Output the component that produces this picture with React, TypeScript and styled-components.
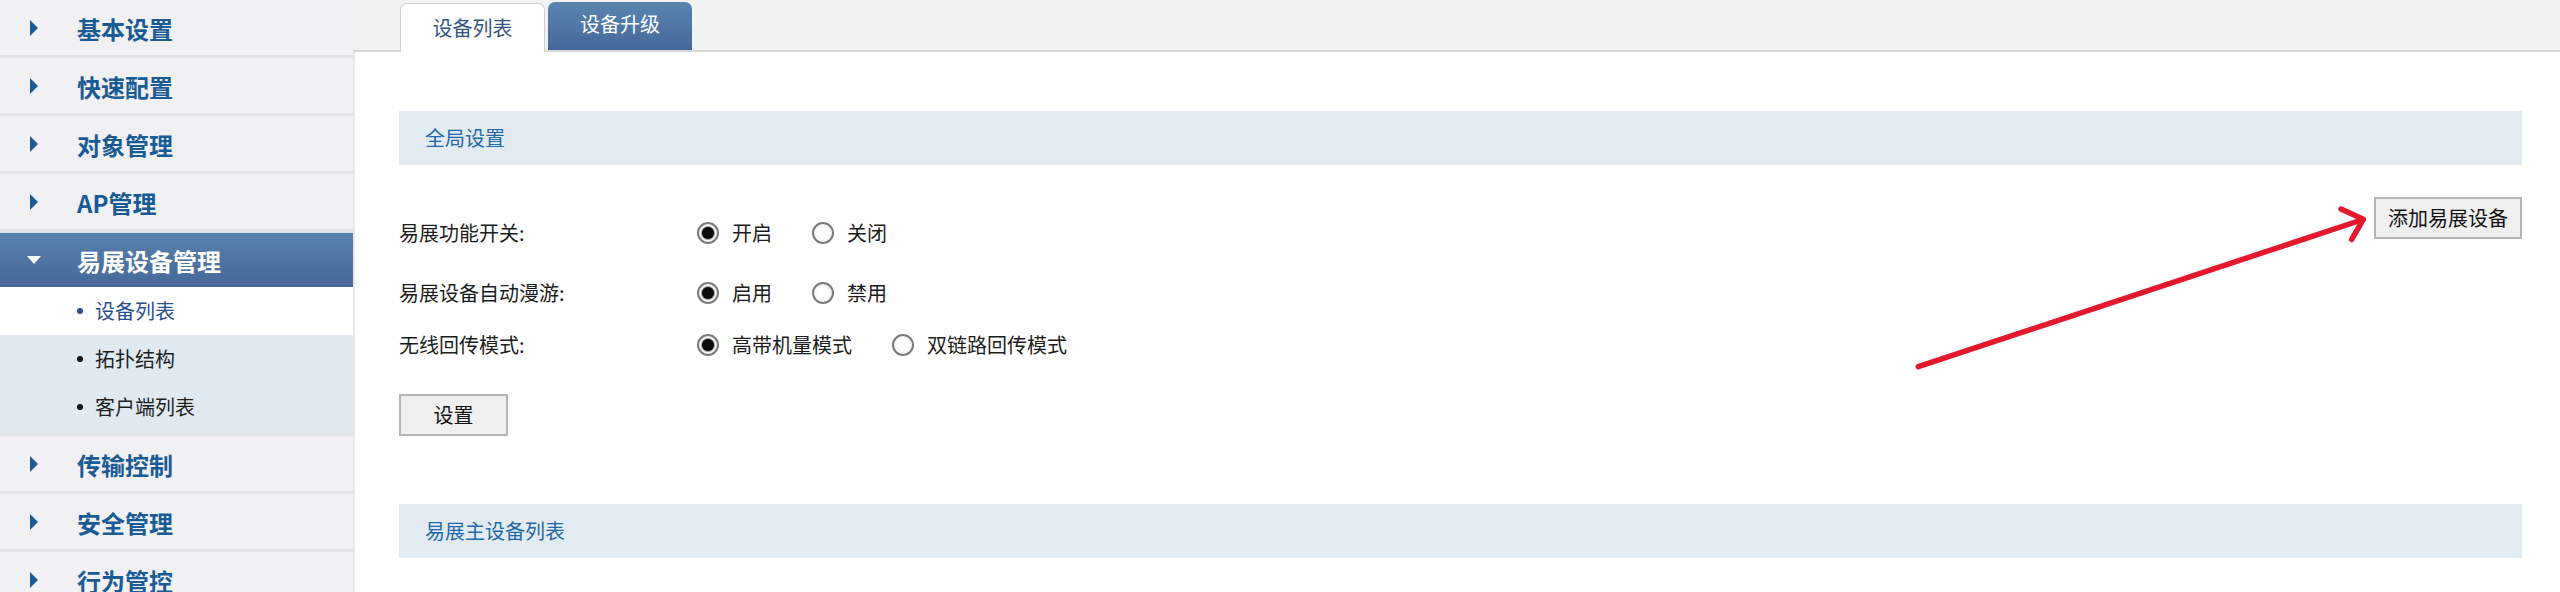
import React from "react"
import styled, { createGlobalStyle } from "styled-components"

const GlobalStyle = createGlobalStyle`
  html, body {
    margin: 0;
    padding: 0;
    background: #ffffff;
    font-family: "Noto Sans CJK SC", "Noto Sans", sans-serif;
  }
`

const menuTop = ["基本设置", "快速配置", "对象管理", "AP管理"]
const subMenu = ["设备列表", "拓扑结构", "客户端列表"]
const menuBottom = ["传输控制", "安全管理", "行为管控"]

const options = [
  { label: "易展功能开关:", items: ["开启", "关闭"], gap: 0 },
  { label: "易展设备自动漫游:", items: ["启用", "禁用"], gap: 8 },
  { label: "无线回传模式:", items: ["高带机量模式", "双链路回传模式"], gap: 0 },
]

const NavGroup = ({ title, open = false }) => (
  <NavItem $active={open}>
    <ArrowBox>
      <Caret $open={open} />
    </ArrowBox>
    <NavText>{title}</NavText>
  </NavItem>
)

export default function App() {
  return (
    <Page>
      <GlobalStyle />
      <Sidebar>
        {menuTop.map((m) => (
          <React.Fragment key={m}>
            <NavGroup title={m} />
            <Divider />
          </React.Fragment>
        ))}
        <NavGroup title="易展设备管理" open />
        <SubList>
          {subMenu.map((s, i) => (
            <SubItem key={s} $active={i === 0}>
              <Bullet $active={i === 0} />
              {s}
            </SubItem>
          ))}
        </SubList>
        {menuBottom.map((m) => (
          <React.Fragment key={m}>
            <Divider />
            <NavGroup title={m} />
          </React.Fragment>
        ))}
      </Sidebar>

      <Main>
        <TabBar>
          <Tab $active>设备列表</Tab>
          <Tab>设备升级</Tab>
        </TabBar>
        <Body>
          <SectionHead>全局设置</SectionHead>
          <FormArea>
            <FormCol>
              {options.map((o) => (
                <FormRow key={o.label} $gap={o.gap}>
                  <Label>{o.label}</Label>
                  {o.items.map((it, i) => (
                    <Option key={it}>
                      <Radio $checked={i === 0} />
                      {it}
                    </Option>
                  ))}
                </FormRow>
              ))}
              <GrayButton $mt={23}>设置</GrayButton>
            </FormCol>
            <GrayButton $wide>添加易展设备</GrayButton>
          </FormArea>
          <SectionHead $mt={68}>易展主设备列表</SectionHead>
        </Body>
      </Main>

      <ArrowMark width="480" height="185" viewBox="0 0 480 185">
        <g stroke="#e3182d" strokeWidth="5.5" strokeLinecap="round" strokeLinejoin="round" fill="none">
          <line x1="18.3" y1="171.7" x2="463" y2="24.5" />
          <polyline points="441,14 463.3,24.3 451.7,44.3" />
        </g>
      </ArrowMark>
    </Page>
  )
}

const Page = styled.div`
  position: relative;
  display: flex;
  width: 2560px;
  height: 592px;
  overflow: hidden;
`

const Sidebar = styled.div`
  width: 353px;
  flex-shrink: 0;
  background: #f1f1f3;
  display: flex;
  flex-direction: column;
`

const NavItem = styled.div`
  height: 55px;
  flex-shrink: 0;
  box-sizing: border-box;
  padding-top: 2px;
  display: flex;
  align-items: center;
  background: ${(p) =>
    p.$active ? "linear-gradient(#5882ac, #46689a)" : "transparent"};
  border-top: ${(p) => (p.$active ? "1px solid #d8dde3" : "none")};
  color: ${(p) => (p.$active ? "#ffffff" : "#1b5b95")};
`

const ArrowBox = styled.span`
  width: 14px;
  margin-left: 27px;
  margin-right: 36px;
  display: flex;
  justify-content: center;
  margin-top: -2px;
`

const Caret = styled.span`
  width: 0;
  height: 0;
  border-style: solid;
  border-color: transparent;
  ${(p) =>
    p.$open
      ? `border-width: 8px 7px 0 7px; border-top-color: #ffffff;`
      : `border-width: 8px 0 8px 8px; border-left-color: #1b5b95;`}
`

const NavText = styled.span`
  font-size: 24px;
  font-weight: 700;
  line-height: 1;
`

const Divider = styled.div`
  height: 3px;
  flex-shrink: 0;
  background: #e3e3e5;
`

const SubList = styled.div`
  background: #e2eaf1;
  padding-bottom: 2px;
`

const SubItem = styled.div`
  height: 48px;
  display: flex;
  align-items: center;
  padding-left: 77px;
  font-size: 20px;
  line-height: 1;
  background: ${(p) => (p.$active ? "#ffffff" : "transparent")};
  color: ${(p) => (p.$active ? "#2a4e8c" : "#1e1e1e")};
`

const Bullet = styled.span`
  width: 6px;
  height: 6px;
  border-radius: 50%;
  margin-right: 12px;
  background: ${(p) => (p.$active ? "#2a4e8c" : "#111111")};
`

const Main = styled.div`
  flex: 1;
  display: flex;
  flex-direction: column;
`

const TabBar = styled.div`
  height: 50px;
  flex-shrink: 0;
  background: #f2f2f2;
  border-bottom: 2px solid #d6d6d6;
  display: flex;
  align-items: flex-end;
  gap: 3px;
  padding-left: 47px;
`

const Tab = styled.div`
  box-sizing: border-box;
  display: flex;
  align-items: center;
  justify-content: center;
  font-size: 20px;
  line-height: 1;
  border-radius: 7px 7px 0 0;
  ${(p) =>
    p.$active
      ? `
    width: 145px;
    height: 49px;
    margin-bottom: -2px;
    background: #ffffff;
    border: 1px solid #cfcfcf;
    border-bottom: none;
    color: #34557f;
  `
      : `
    width: 144px;
    height: 48px;
    background: linear-gradient(#5a84b0, #45689a);
    color: #ffffff;
    padding-bottom: 4px;
  `}
`

const Body = styled.div`
  flex: 1;
  background: #ffffff;
  border-left: 2px solid #e8e8e8;
  padding: 59px 38px 0 44px;
`

const SectionHead = styled.div`
  height: 54px;
  margin-top: ${(p) => p.$mt || 0}px;
  background: #e2ebf2;
  display: flex;
  align-items: center;
  padding-left: 26px;
  font-size: 20px;
  line-height: 1;
  color: #2468a8;
`

const FormArea = styled.div`
  display: flex;
  justify-content: space-between;
  align-items: flex-start;
  padding-top: 32px;
`

const FormCol = styled.div`
  padding-top: 10px;
  display: flex;
  flex-direction: column;
  align-items: flex-start;
`

const FormRow = styled.div`
  height: 52px;
  margin-top: ${(p) => p.$gap}px;
  display: flex;
  align-items: center;
  font-size: 20px;
  line-height: 1;
  color: #1c1c1c;
`

const Label = styled.span`
  width: 298px;
`

const Option = styled.span`
  display: flex;
  align-items: center;
  margin-right: 40px;
`

const Radio = styled.span`
  position: relative;
  box-sizing: border-box;
  width: 22px;
  height: 22px;
  margin-right: 13px;
  border-radius: 50%;
  border: 2px solid #7b7b7b;
  background: radial-gradient(circle, #ffffff 40%, #e6e6e6 100%);
  &::after {
    content: "";
    display: ${(p) => (p.$checked ? "block" : "none")};
    position: absolute;
    left: 3px;
    top: 3px;
    width: 12px;
    height: 12px;
    border-radius: 50%;
    background: #0c0c0c;
    box-shadow: 0 0 0 1px #9a9a9a;
  }
`

const GrayButton = styled.button`
  box-sizing: border-box;
  height: 42px;
  width: ${(p) => (p.$wide ? 148 : 109)}px;
  margin-top: ${(p) => p.$mt || 0}px;
  padding: 0;
  background: #efefef;
  border: 2px solid #b5b5b5;
  border-radius: 0;
  font-family: "Noto Sans CJK SC", sans-serif;
  font-size: 20px;
  line-height: 1;
  color: #111111;
`

const ArrowMark = styled.svg`
  position: absolute;
  left: 1900px;
  top: 195px;
  pointer-events: none;
`
